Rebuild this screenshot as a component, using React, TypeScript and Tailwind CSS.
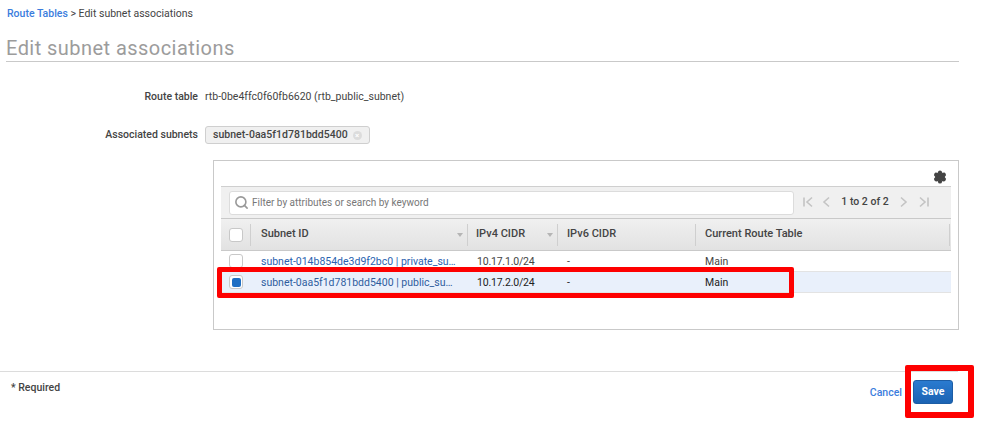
import React from "react";
import { Search, Settings } from "lucide-react";

function Check({ on }: { on?: boolean }) {
  return (
    <div className="w-[14px] h-[14px] rounded-[3px] border border-[#c8c8c8] bg-white flex items-center justify-center">
      {on && <div className="w-[9px] h-[9px] rounded-[2px] bg-[#1f6fc4]" />}
    </div>
  );
}

function Pager() {
  return (
    <svg width="130" height="14" viewBox="0 0 130 14" fill="none" stroke="#c4c4c4" strokeWidth="1.6" className="shrink-0">
      <path d="M1 2.5v9M9 2.5 4 7l5 4.5" />
      <path d="M26 2.5 21 7l5 4.5" />
      <path d="M98 2.5 103 7l-5 4.5" />
      <path d="M117 2.5 122 7l-5 4.5M125 2.5v9" />
    </svg>
  );
}

function Row({ sel, id, cidr }: { sel?: boolean; id: string; cidr: string }) {
  return (
    <div className={`flex h-[21px] items-center pt-[1px] border-b border-[#e3e3e3] ${sel ? "bg-[#e9f0fb] text-[#222]" : "bg-white text-[#444]"}`}>
      <div className="w-[40px] pl-[8px] shrink-0 -mt-[1px]"><Check on={sel} /></div>
      <div className={`w-[216px] shrink-0 truncate ${sel ? "text-[#2f5d9e]" : "text-[#2a62b0]"}`}>{id}</div>
      <div className="w-[90px] shrink-0 tracking-[-0.2px]">{cidr}</div>
      <div className="w-[138px] shrink-0">-</div>
      <div>Main</div>
    </div>
  );
}

function Head({ w, label, sort, pl }: { w: string; label: string; sort?: boolean; pl: string }) {
  return (
    <div className={`${w} ${pl} h-[22px] shrink-0 flex items-center justify-between border-r border-[#cfcfcf] pr-[3px]`}>
      <span>{label}</span>
      {sort && <span className="w-0 h-0 border-x-[3.5px] border-x-transparent border-t-[4px] border-t-[#b5b5b5] mr-[1px]" />}
    </div>
  );
}

export default function App() {
  return (
    <div className="relative w-[991px] h-[443px] overflow-hidden bg-white text-[10.5px] text-[#444] font-['Roboto',sans-serif]">
      <div className="pl-[7px] pt-[7px] h-[13px] box-content leading-[13px]">
        <span className="text-[#3b7ddd] font-medium">Route Tables</span>
        <span className="text-[#444]"> &gt; Edit subnet associations</span>
      </div>
      <div className="mx-[6px] w-[953px] mt-[16px] h-[26px] border-b border-[#c9c9c9] text-[20px] leading-[24px] text-[#9c9c9c] tracking-[0.45px]">
        Edit subnet associations
      </div>

      <div className="flex items-center mt-[27px] h-[16px]">
        <div className="w-[198px] text-right font-medium text-[#444]">Route table</div>
        <div className="ml-[7px]">rtb-0be4ffc0f60fb6620 (rtb_public_subnet)</div>
      </div>
      <div className="flex items-center mt-[21px] h-[18px]">
        <div className="w-[198px] text-right font-medium text-[#444]">Associated subnets</div>
        <div className="ml-[7px] w-[165px] h-[18px] flex items-center pl-[7px] rounded-[3px] border border-[#cfcfcf] bg-[#f0f0f0] font-medium tracking-[0.03px]">
          <span>subnet-0aa5f1d781bdd5400</span>
          <span className="ml-[5px] w-[9px] h-[9px] rounded-full bg-[#dcdcdc] text-white text-[8px] leading-[9px] text-center">×</span>
        </div>
      </div>

      <div className="ml-[213px] mt-[16px] w-[746px] h-[170px] border border-[#c9c9c9] px-[7px] bg-white">
        <div className="h-[25px] flex items-end justify-end pr-[3px] pb-[2px]">
          <Settings size={14} fill="#444" stroke="#444" strokeWidth={2.5} className="mr-[1px]" />
        </div>
        <div className="border-t border-[#cfcfcf] h-[32px] bg-[#f0f0f0] flex items-center pl-[8px]">
          <div className="w-[565px] h-[24px] flex items-center border border-[#dcdcdc] rounded-[3px] bg-white pl-[4px] text-[#777]">
            <Search size={15} stroke="#999" strokeWidth={2.6} />
            <span className="ml-[3px] text-[10px] -mt-[1px]">Filter by attributes or search by keyword</span>
          </div>
          <div className="ml-[9px] relative w-[130px] h-[14px] -mt-[1px]">
            <Pager />
            <div className="absolute inset-0 pr-[6px] text-center text-[10.5px] leading-[14px] font-medium text-[#444]">1 to 2 of 2</div>
          </div>
        </div>
        <div className="h-[33px] flex items-center border-y border-[#c9c9c9] bg-gradient-to-b from-[#f0f0f0] to-[#e2e2e2] font-medium text-[11px] text-[#444]">
          <div className="w-[30px] pl-[8px] h-[22px] flex items-center shrink-0 border-r border-[#cfcfcf]"><Check /></div>
          <Head w="w-[217px]" pl="pl-[10px]" label="Subnet ID" sort />
          <Head w="w-[90px]" pl="pl-[8px]" label="IPv4 CIDR" sort />
          <Head w="w-[138px]" pl="pl-[9px]" label="IPv6 CIDR" />
          <Head w="w-[254px]" pl="pl-[9px]" label="Current Route Table" />
        </div>
        <Row id="subnet-014b854de3d9f2bc0 | private_su…" cidr="10.17.1.0/24" />
        <Row sel id="subnet-0aa5f1d781bdd5400 | public_su…" cidr="10.17.2.0/24" />
      </div>

      <div className="mt-[41px] w-[958px] h-[41px] border-t border-[#dcdcdc] flex items-center justify-between pl-[11px] pr-[5px]">
        <span className="font-medium text-[#444] -mt-[9px]">* Required</span>
        <div className="flex items-center gap-[11px]">
          <span className="text-[#3b7ddd] font-medium mt-[1px]">Cancel</span>
          <button className="w-[40px] h-[24px] rounded-[3px] border border-[#1c5da5] bg-gradient-to-b from-[#2a7bd0] to-[#1b63b3] text-white font-bold">Save</button>
        </div>
      </div>

      <div className="absolute left-[217px] top-[267px] w-[577px] h-[31px] border-[5px] border-[#fe0000] rounded-[2px]" />
      <div className="absolute left-[905px] top-[365px] w-[69px] h-[53px] border-[6px] border-[#fe0000] rounded-[2px]" />
    </div>
  );
}
